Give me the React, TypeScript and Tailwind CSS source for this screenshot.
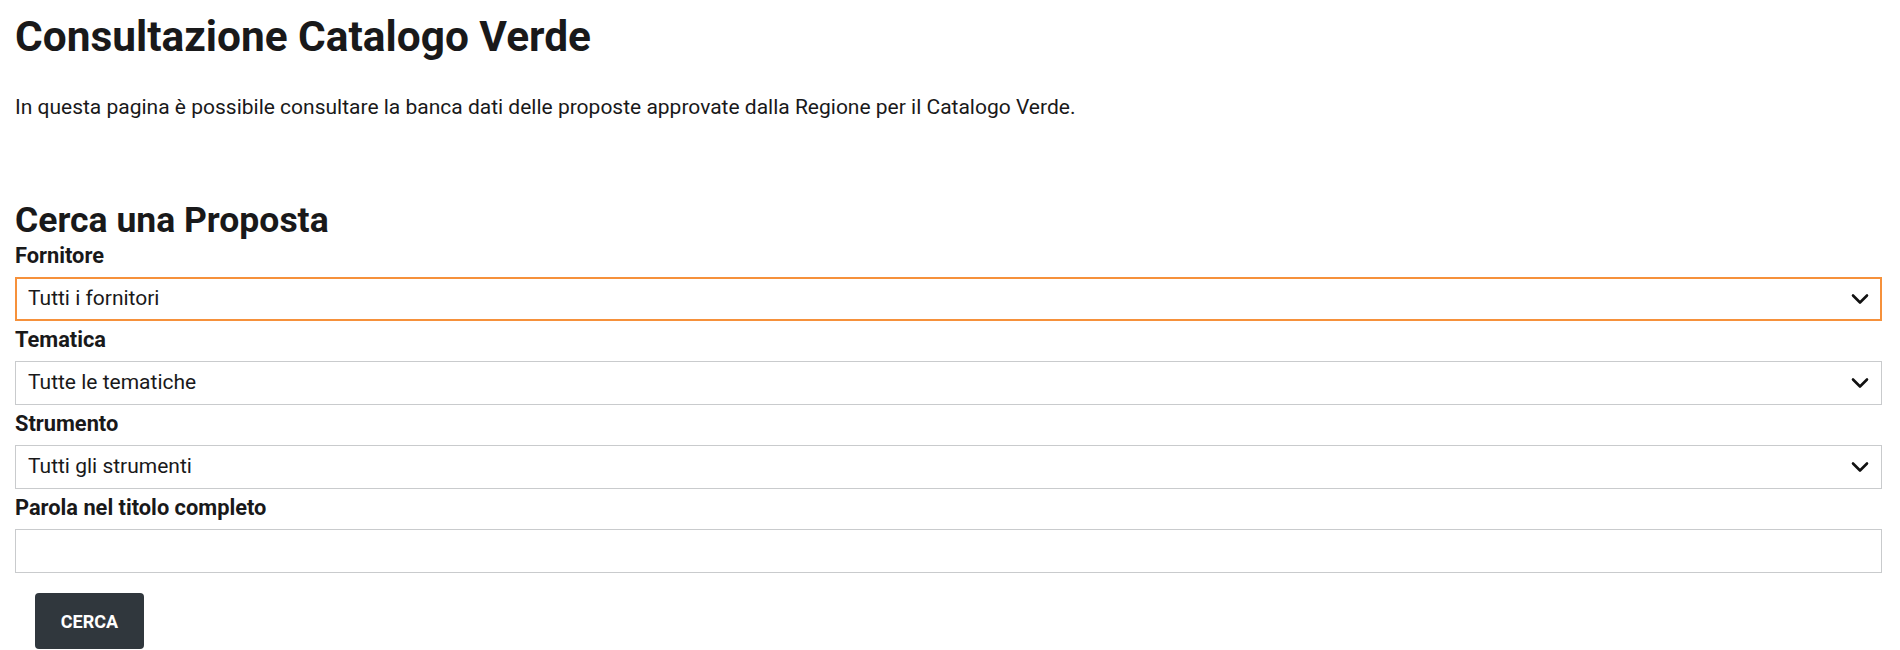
import React, { useState } from 'react';

const Chevron: React.FC = () => (
  <svg
    className="pointer-events-none absolute right-[13px] top-1/2 -translate-y-1/2"
    width="18"
    height="11"
    viewBox="0 0 18 11"
    fill="none"
  >
    <path d="M2 2l7 7 7-7" stroke="#111" strokeWidth="2.6" strokeLinecap="round" strokeLinejoin="round" />
  </svg>
);

type SelectFieldProps = {
  label: string;
  options: string[];
  focused?: boolean;
};

const SelectField: React.FC<SelectFieldProps> = ({ label, options, focused }) => {
  const [value, setValue] = useState(options[0]);
  return (
    <div>
      <label className="block text-[21.8px] font-bold leading-[38px] mb-[2px] text-[#19191a]">{label}</label>
      <div className="relative">
        <select
          value={value}
          onChange={(e) => setValue(e.target.value)}
          className={
            focused
              ? 'block w-full h-[44px] appearance-none bg-white border-2 border-[#f6913b] pl-[11px] pr-10 text-[21px] text-[#19191a] outline-none'
              : 'block w-full h-[44px] appearance-none bg-white border border-[#c9cbcd] pl-[12px] pr-10 text-[21px] text-[#19191a] outline-none'
          }
        >
          {options.map((o) => (
            <option key={o}>{o}</option>
          ))}
        </select>
        <Chevron />
      </div>
    </div>
  );
};

const App: React.FC = () => {
  const [query, setQuery] = useState('');

  return (
    <div className="min-h-screen bg-white font-[Roboto,sans-serif] text-[#19191a] pl-[15px] pr-[18px] pt-[13px]">
      <h1 className="text-[42.4px] font-bold leading-[47px]">Consultazione Catalogo Verde</h1>
      <p className="mt-[33px] text-[21px] leading-[28px]">
        In questa pagina è possibile consultare la banca dati delle proposte approvate dalla Regione per il Catalogo Verde.
      </p>

      <h2 className="mt-[82px] text-[35.5px] font-bold leading-[34px]">Cerca una Proposta</h2>

      <form onSubmit={(e) => e.preventDefault()}>
        <SelectField label="Fornitore" options={['Tutti i fornitori']} focused />
        <SelectField label="Tematica" options={['Tutte le tematiche']} />
        <SelectField label="Strumento" options={['Tutti gli strumenti']} />

        <div>
          <label className="block text-[21.8px] font-bold leading-[38px] mb-[2px]">Parola nel titolo completo</label>
          <input
            value={query}
            onChange={(e) => setQuery(e.target.value)}
            className="block w-full h-[44px] bg-white border border-[#c9cbcd] px-[12px] text-[21px] outline-none"
          />
        </div>

        <button
          type="submit"
          className="mt-[20px] ml-[20px] w-[109px] h-[56px] rounded-[4px] bg-[#30373d] text-white text-[18px] font-bold"
        >
          CERCA
        </button>
      </form>
    </div>
  );
};

export default App;
